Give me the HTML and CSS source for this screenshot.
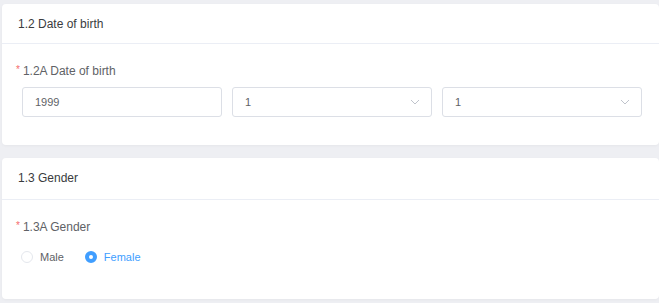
FILE: index.html
```html
<!DOCTYPE html>
<html lang="en">
<head>
  <meta charset="UTF-8">
  <title>Personal details</title>
  <meta name="viewport" content="width=device-width, initial-scale=1.0">
  <link rel="stylesheet" href="styles.css">
</head>
<body>

  <div class="section-card">
    <div class="section-header">1.2 Date of birth</div>
    <div class="section-body">
      <div class="field-label"><span class="required">*</span>1.2A Date of birth</div>
      <div class="date-row">
        <div class="input-box">1999</div>
        <div class="input-box select">
          <span>1</span>
          <svg class="arrow" width="10" height="6" viewBox="0 0 10 6"><path d="M1 1l4 4 4-4" fill="none" stroke="#c0c4cc" stroke-width="1"/></svg>
        </div>
        <div class="input-box select">
          <span>1</span>
          <svg class="arrow" width="10" height="6" viewBox="0 0 10 6"><path d="M1 1l4 4 4-4" fill="none" stroke="#c0c4cc" stroke-width="1"/></svg>
        </div>
      </div>
    </div>
  </div>

  <div class="section-card second">
    <div class="section-header">1.3 Gender</div>
    <div class="section-body">
      <div class="field-label"><span class="required">*</span>1.3A Gender</div>
      <div class="radio-row">
        <label class="radio"><span class="radio-dot"></span>Male</label>
        <label class="radio checked"><span class="radio-dot"></span>Female</label>
      </div>
    </div>
  </div>

</body>
</html>
```

FILE: styles.css
```css
body {
  font-family: "Liberation Sans", Arial, sans-serif;
  background-color: #eeeff3;
  margin: 0;
  padding: 4px 0 0 2px;
  color: #303133;
}
.section-card {
  background-color: #ffffff;
  border-radius: 4px;
  box-shadow: 0 1px 3px rgba(0, 0, 0, 0.04);
  margin-bottom: 13px;
}
.section-header {
  height: 39px;
  line-height: 41px;
  padding: 0 16px;
  font-size: 12px;
  color: #3a3b3e;
  border-bottom: 1px solid #ebeef5;
}
.second .section-header {
  height: 41px;
  line-height: 41px;
}
.section-body {
  padding: 16px 17px 28px 14px;
}
.second .section-body {
  padding-bottom: 32px;
}
.field-label {
  font-size: 12px;
  line-height: 20px;
  color: #606266;
  margin-bottom: 6px;
}
.required {
  color: #f56c6c;
  font-size: 10px;
  margin-right: 3px;
  vertical-align: 2px;
}
.date-row {
  display: flex;
  gap: 10px;
  padding-left: 6px;
}
.input-box {
  width: 200px;
  height: 30px;
  box-sizing: border-box;
  border: 1px solid #dcdfe6;
  border-radius: 3px;
  padding: 0 12px;
  font-size: 11px;
  line-height: 28px;
  color: #606266;
}
.select {
  display: flex;
  justify-content: space-between;
  align-items: center;
}
.arrow {
  margin-right: -1px;
}
.radio-row {
  display: flex;
  gap: 21px;
  padding-left: 5px;
  margin-top: 10px;
}
.radio {
  display: flex;
  align-items: center;
  font-size: 11px;
  color: #606266;
  height: 20px;
}
.radio-dot {
  width: 12px;
  height: 12px;
  box-sizing: border-box;
  border: 1px solid #e4e7ed;
  border-radius: 50%;
  margin-right: 7px;
  background-color: #ffffff;
}
.radio.checked {
  color: #409eff;
}
.radio.checked .radio-dot {
  border: 4px solid #409eff;
  background-color: #ffffff;
}
```
